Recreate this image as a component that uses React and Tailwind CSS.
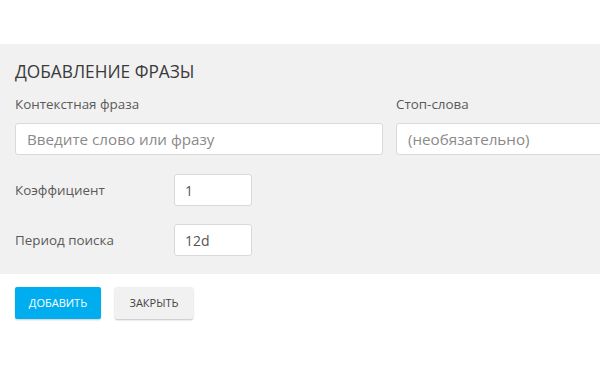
export default function App() {
  return (
    <div className="w-[600px] h-[370px] overflow-hidden bg-white font-['Open_Sans',sans-serif]">
      <div className="h-[44px]" />
      <div className="w-[800px] bg-[#f1f1f1] pl-[15px] pt-[16px] pb-[18px]">
        <h2 className="text-[17.3px] leading-[24px] text-[#3a3a3a] uppercase">Добавление фразы</h2>
        <div className="grid grid-cols-[368px_368px] gap-x-[13px] mt-[11px]">
          <div>
            <label className="block text-[13.4px] leading-[18px] text-[#5a5a5a]">Контекстная фраза</label>
            <input
              placeholder="Введите слово или фразу"
              className="mt-[10px] w-full h-[32px] px-[11px] bg-white border border-[#d9d9d9] rounded-[3px] text-[15.2px] placeholder:text-[#8a8a8a] outline-none"
            />
          </div>
          <div>
            <label className="block text-[13.4px] leading-[18px] text-[#5a5a5a]">Стоп-слова</label>
            <input
              placeholder="(необязательно)"
              className="mt-[10px] w-full h-[32px] px-[11px] bg-white border border-[#d9d9d9] rounded-[3px] text-[15.2px] placeholder:text-[#8a8a8a] outline-none"
            />
          </div>
        </div>
        <div className="flex items-center mt-[19px]">
          <label className="w-[159px] text-[13.4px] text-[#5a5a5a]">Коэффициент</label>
          <input
            defaultValue="1"
            className="w-[78px] h-[32px] px-[10px] bg-white border border-[#d9d9d9] rounded-[3px] text-[14px] text-[#555] outline-none"
          />
        </div>
        <div className="flex items-center mt-[18px]">
          <label className="w-[159px] text-[13.4px] text-[#5a5a5a]">Период поиска</label>
          <input
            defaultValue="12d"
            className="w-[78px] h-[32px] px-[10px] bg-white border border-[#d9d9d9] rounded-[3px] text-[14px] text-[#555] outline-none"
          />
        </div>
      </div>
      <div className="flex items-center gap-[14px] pl-[15px] mt-[13px]">
        <button className="h-[32px] w-[86px] bg-[#00aeef] text-white text-[11px] uppercase rounded-[2px] shadow-[0_1px_2px_rgba(0,0,0,0.2)]">
          Добавить
        </button>
        <button className="h-[32px] w-[78px] bg-[#f1f1f1] text-[#444] text-[11px] uppercase rounded-[2px] shadow-[0_1px_2px_rgba(0,0,0,0.25)]">
          Закрыть
        </button>
      </div>
    </div>
  )
}
